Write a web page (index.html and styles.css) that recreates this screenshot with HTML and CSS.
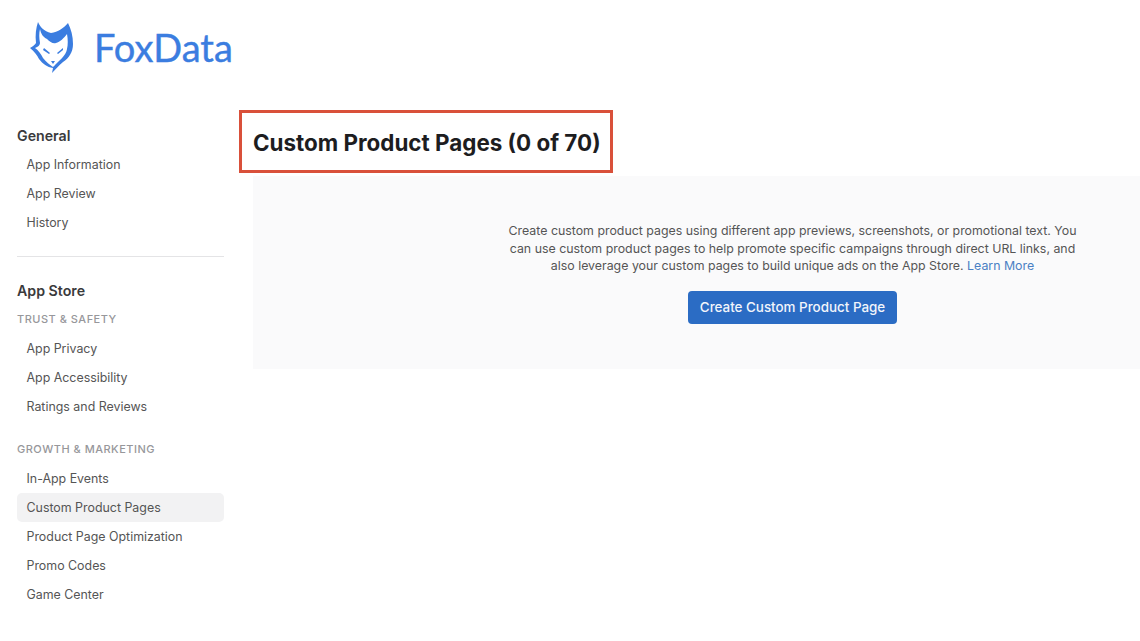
FILE: index.html
```html
<!DOCTYPE html>
<html lang="en">
<head>
  <meta charset="UTF-8" />
  <title>Custom Product Pages</title>
  <link rel="stylesheet" href="styles.css">
</head>
<body>
  <header class="brand">
    <svg class="brand-logo" viewBox="0 0 46 54" width="46" height="54">
      <path fill="#3b7de0" d="M10 2C12 7 16 11 23 13C30 12 36 8 40 3C43 9 45 16 45 24C45 32 41 38 35 42C31 45 28 49 24 53L25 48C19 47 15 44 11 39C9 35 6 31 2 28C5 26 7 25 8 23C7 15 8 8 10 2Z"/>
      <path fill="#fff" d="M12 9C13 14 15 17 19 19C22 22 25 24 28 23C32 22 36 18 39 14C40 19 40 25 39 29C38 35 33 39 29 43C27 45 26 46 25 47C22 45 18 42 15 38C13 34 10 30 7 28C10 27 12 25 12 23C11 18 11 13 12 9Z"/>
      <path fill="#3b7de0" d="M16 28L22 33L21 34L15 30ZM35 28L29 33L30 34L35 30ZM23 41L27 41L25 44Z"/>
    </svg>
    <span class="brand-name">FoxData</span>
  </header>

  <div class="layout">
    <nav class="sidebar">
      <h2 class="nav-title">General</h2>
      <a class="nav-item">App Information</a>
      <a class="nav-item">App Review</a>
      <a class="nav-item">History</a>
      <hr class="nav-line">
      <h2 class="nav-title">App Store</h2>
      <h3 class="nav-group">TRUST &amp; SAFETY</h3>
      <a class="nav-item">App Privacy</a>
      <a class="nav-item">App Accessibility</a>
      <a class="nav-item">Ratings and Reviews</a>
      <h3 class="nav-group nav-group-gap">GROWTH &amp; MARKETING</h3>
      <a class="nav-item">In-App Events</a>
      <a class="nav-item active">Custom Product Pages</a>
      <a class="nav-item">Product Page Optimization</a>
      <a class="nav-item">Promo Codes</a>
      <a class="nav-item">Game Center</a>
    </nav>

    <main class="content">
      <div class="title-box">
        <h1>Custom Product Pages (0 of 70)</h1>
      </div>
      <section class="panel">
        <p>Create custom product pages using different app previews, screenshots, or promotional text. You can use custom product pages to help promote specific campaigns through direct URL links, and also leverage your custom pages to build unique ads on the App Store. <a href="#">Learn More</a></p>
        <button>Create Custom Product Page</button>
      </section>
    </main>
  </div>
</body>
</html>
```

FILE: styles.css
```css
* { box-sizing: border-box; }
body {
  margin: 0;
  background: #fff;
  color: #333;
  font-family: Inter, 'Liberation Sans', sans-serif;
  overflow: hidden;
}
.brand {
  display: flex;
  align-items: center;
  height: 110px;
  padding: 0 0 17px 28px;
}
.brand-logo {
  margin-right: 20px;
}
.brand-name {
  font-family: Lato, sans-serif;
  font-size: 38px;
  -webkit-text-stroke: 0.4px #3b7de0;
  color: #3b7de0;
}
.layout {
  display: flex;
}
.sidebar {
  width: 207px;
  margin-left: 17px;
  padding-top: 15px;
  flex-shrink: 0;
}
.nav-title {
  margin: 0;
  font-size: 14.2px;
  font-weight: 600;
  line-height: 22px;
  color: #3a3a3c;
}
.nav-item {
  display: block;
  height: 29px;
  line-height: 29px;
  padding-left: 9.5px;
  font-size: 12.4px;
  color: #555;
  border-radius: 5px;
}
.nav-title + .nav-item {
  margin-top: 3px;
}
.nav-item.active {
  background: #f2f2f3;
}
.nav-line {
  margin: 19px 0 23px;
  border: 0;
  border-top: 1px solid #e4e4e6;
}
.nav-group {
  margin: 0;
  font-size: 11px;
  font-weight: 500;
  line-height: 20px;
  letter-spacing: 0.5px;
  color: #97979b;
  padding: 7px 0 5px;
  height: 32px;
}
.nav-group-gap {
  margin-top: 11px;
}
.content {
  flex: 1;
  margin-left: 29px;
  min-width: 0;
}
.title-box {
  width: 374px;
  height: 63px;
  margin-left: -14px;
  padding: 2px 0 0 11px;
  border: 3px solid #d9503a;
  display: flex;
  align-items: center;
}
.title-box h1 {
  margin: 0;
  font-size: 22.4px;
  font-weight: 700;
  color: #1d1d1f;
  white-space: nowrap;
}
.panel {
  height: 193px;
  margin-top: 3px;
  background: #fafafb;
  padding-top: 46px;
  display: flex;
  flex-direction: column;
  align-items: center;
}
.panel p {
  width: 580px;
  margin: 0 0 16px 192px;
  font-size: 12.37px;
  line-height: 17.5px;
  text-align: center;
  color: #555;
}
.panel a {
  color: #4a80c4;
  text-decoration: none;
}
.panel button {
  width: 209px;
  height: 33px;
  margin-left: 192px;
  border: 0;
  border-radius: 4px;
  background: #2b6cc4;
  color: #f2f5fb;
  font-family: inherit;
  font-size: 13.4px;
  font-weight: 500;
}
```
